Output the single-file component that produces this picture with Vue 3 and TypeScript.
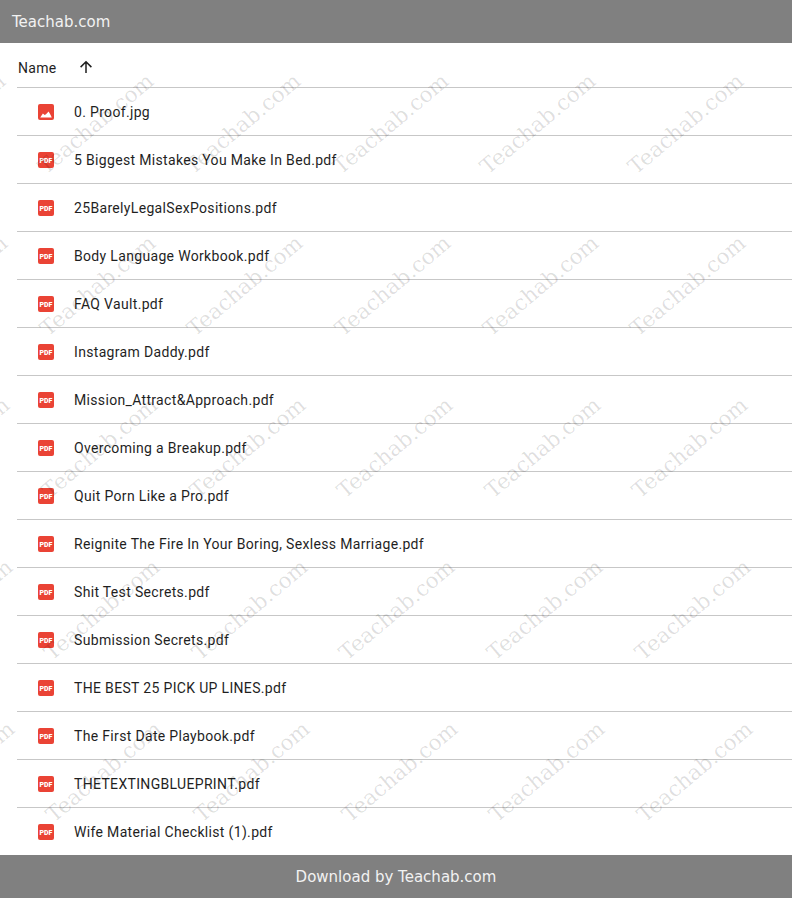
<script setup lang="ts">
interface DriveFile {
  name: string
  kind: 'image' | 'pdf'
}

const files: DriveFile[] = [
  { name: '0. Proof.jpg', kind: 'image' },
  { name: '5 Biggest Mistakes You Make In Bed.pdf', kind: 'pdf' },
  { name: '25BarelyLegalSexPositions.pdf', kind: 'pdf' },
  { name: 'Body Language Workbook.pdf', kind: 'pdf' },
  { name: 'FAQ Vault.pdf', kind: 'pdf' },
  { name: 'Instagram Daddy.pdf', kind: 'pdf' },
  { name: 'Mission_Attract&Approach.pdf', kind: 'pdf' },
  { name: 'Overcoming a Breakup.pdf', kind: 'pdf' },
  { name: 'Quit Porn Like a Pro.pdf', kind: 'pdf' },
  { name: 'Reignite The Fire In Your Boring, Sexless Marriage.pdf', kind: 'pdf' },
  { name: 'Shit Test Secrets.pdf', kind: 'pdf' },
  { name: 'Submission Secrets.pdf', kind: 'pdf' },
  { name: 'THE BEST 25 PICK UP LINES.pdf', kind: 'pdf' },
  { name: 'The First Date Playbook.pdf', kind: 'pdf' },
  { name: 'THETEXTINGBLUEPRINT.pdf', kind: 'pdf' },
  { name: 'Wife Material Checklist (1).pdf', kind: 'pdf' }
]

// the watermark repeats on a slightly sheared grid, left/top are mark centres
const marks: { left: number; top: number }[] = []
for (let row = 0; row < 5; row++) {
  for (let col = 0; col < 6; col++) {
    marks.push({
      left: -52 + col * 147.6 + row * 2.2,
      top: 123.5 + row * 162
    })
  }
}
</script>

<template>
  <div class="page">
    <header class="bar top">Teachab.com</header>

    <main class="list">
      <div class="head">
        <span class="head-name">Name</span>
        <svg class="arrow" viewBox="0 0 24 24" width="18" height="18">
          <path d="M12 20V5M4.8 12.2 12 5l7.2 7.2" fill="none" stroke="#1f1f1f" stroke-width="2" />
        </svg>
      </div>
      <div v-for="file in files" :key="file.name" class="row">
        <svg class="icon" viewBox="0 0 16 16" width="16" height="16">
          <rect width="16" height="16" rx="2" fill="#ea4335" />
          <path
            v-if="file.kind === 'image'"
            d="M2.2 13.5 4.9 9.4 6.7 11 8 10.2 10.6 7.6 12.2 10.2 13.8 13.5Z"
            fill="#fff"
          />
          <text v-else x="8" y="10.5" class="pdf-label">PDF</text>
        </svg>
        <span class="name">{{ file.name }}</span>
      </div>
    </main>

    <footer class="bar bottom">Download by Teachab.com</footer>

    <div class="marks">
      <span
        v-for="(mark, i) in marks"
        :key="i"
        class="mark"
        :style="{ left: mark.left + 'px', top: mark.top + 'px' }"
      >Teachab.com</span>
    </div>
  </div>
</template>

<style>
html,
body {
  background: #fff;
}
</style>

<style scoped>
.page {
  position: relative;
  width: 792px;
  height: 898px;
  overflow: hidden;
  display: flex;
  flex-direction: column;
  font-family: Roboto, sans-serif;
  background: #fff;
}

.bar {
  height: 43px;
  flex: none;
  display: flex;
  align-items: center;
  background: #808080;
  color: #f2f2f2;
  font-family: "DejaVu Sans", sans-serif;
  font-size: 15px;
  position: relative;
  z-index: 2;
}

.top {
  padding-left: 12px;
}

.bottom {
  justify-content: center;
}

.list {
  flex: 1;
  padding-left: 17px;
  min-height: 0;
}

.head {
  height: 45px;
  box-sizing: border-box;
  padding: 6px 0 0 1px;
  display: flex;
  align-items: center;
  border-bottom: 1px solid #c7c7c7;
  font-size: 14px;
  letter-spacing: 0.33px;
  color: #1f1f1f;
}

.head-name {
  width: 59px;
}

.arrow {
  margin-top: -2px;
}

.row {
  height: 48px;
  box-sizing: border-box;
  display: flex;
  align-items: center;
  padding-left: 21px;
  border-bottom: 1px solid #c7c7c7;
}

.row:last-child {
  border-bottom: none;
}

.icon {
  flex: none;
}

.pdf-label {
  fill: #fff;
  font-family: Roboto, sans-serif;
  font-size: 7px;
  font-weight: 900;
  text-anchor: middle;
}

.name {
  margin-left: 20px;
  font-size: 14px;
  letter-spacing: 0.33px;
  color: #1f1f1f;
}

.marks {
  position: absolute;
  inset: 0;
  pointer-events: none;
  z-index: 1;
}

.mark {
  position: absolute;
  font-family: "DejaVu Serif", serif;
  font-size: 21.5px;
  line-height: 24px;
  white-space: nowrap;
  color: rgba(0, 0, 0, 0.13);
  transform: translate(-50%, -50%) rotate(-40deg);
}
</style>
